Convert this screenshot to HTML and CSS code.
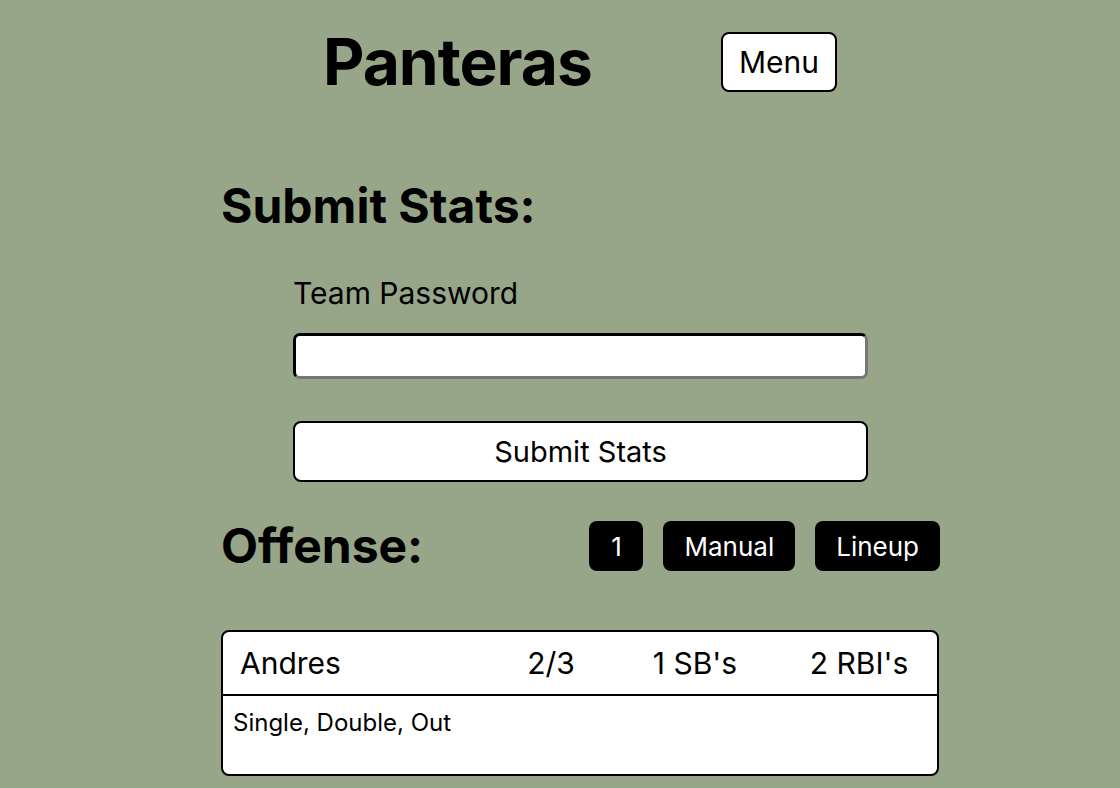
FILE: index.html
```html
<!DOCTYPE html>
<html>
<head>
<meta charset="utf-8">
<link rel="stylesheet" href="styles.css">
</head>
<body>
<div class="page">
  <header class="top">
    <h1 class="brand">Panteras</h1>
    <button class="menu-btn">Menu</button>
  </header>

  <section class="submit">
    <h2 class="section-title">Submit Stats:</h2>
    <form class="submit-form">
      <label class="field-label" for="pw">Team Password</label>
      <input class="field-input" id="pw" type="password">
      <button type="button" class="submit-btn">Submit Stats</button>
    </form>
  </section>

  <section class="offense">
    <div class="offense-head">
      <h2 class="section-title">Offense:</h2>
      <div class="tabs">
        <button class="tab tab-num">1</button>
        <button class="tab">Manual</button>
        <button class="tab">Lineup</button>
      </div>
    </div>
    <div class="card">
      <div class="card-row">
        <span class="player">Andres</span>
        <span class="stat">2/3</span>
        <span class="stat">1 SB's</span>
        <span class="stat">2 RBI's</span>
      </div>
      <div class="card-notes">Single, Double, Out</div>
    </div>
  </section>
</div>
</body>
</html>
```

FILE: styles.css
```css
* { box-sizing: border-box; }
html, body { margin: 0; padding: 0; }
body {
  background: #97a688;
  font-family: Inter, "Noto Sans", sans-serif;
  color: #000;
  height: 788px;
  overflow: hidden;
}
.page {
  width: 718px;
  margin-left: 221px;
}
.top {
  display: flex;
  justify-content: space-between;
  align-items: center;
  padding: 32px 102px 0;
}
.brand {
  margin: 0;
  font-size: 64px;
  font-weight: 700;
  letter-spacing: -1px;
  line-height: 60px;
}
.menu-btn {
  height: 60px;
  width: 116px;
  background: #fff;
  border: 2px solid #000;
  border-radius: 8px;
  font-family: inherit;
  font-size: 30px;
  color: #000;
}
.section-title {
  margin: 0;
  font-size: 48px;
  font-weight: 700;
  line-height: 56px;
}
.submit { margin-top: 86px; }
.submit-form {
  display: flex;
  flex-direction: column;
  padding-left: 72px;
  width: 647px;
  margin-top: 39px;
}
.field-label {
  font-size: 30px;
  line-height: 40px;
}
.field-input {
  margin-top: 20px;
  height: 46px;
  border: 3px inset #222;
  border-color: #222 #777 #777 #222;
  border-radius: 7px;
  background: #fff;
}
.submit-btn {
  margin-top: 42px;
  height: 61px;
  background: #fff;
  border: 2px solid #000;
  border-radius: 8px;
  font-family: inherit;
  font-size: 29px;
  color: #000;
}
.offense { margin-top: 36px; }
.offense-head {
  display: flex;
  justify-content: space-between;
  align-items: center;
}
.tabs { display: flex; gap: 20px; margin-right: -1px; }
.tab {
  height: 50px;
  padding: 0 21px;
  background: #000;
  color: #fff;
  border: none;
  border-radius: 8px;
  font-family: inherit;
  font-size: 26px;
}
.tab-num { min-width: 54px; padding: 0; }
.card {
  margin-top: 56px;
  background: #fff;
  border: 2px solid #000;
  border-radius: 8px;
}
.card-row {
  display: grid;
  grid-template-columns: 1fr 90px 120px 130px;
  column-gap: 39px;
  align-items: center;
  height: 64px;
  padding: 0 13px 0 17px;
  border-bottom: 2px solid #000;
  font-size: 30px;
}
.stat { text-align: center; }
.card-notes {
  height: 78px;
  padding: 12px 10px;
  font-size: 24px;
}
```
